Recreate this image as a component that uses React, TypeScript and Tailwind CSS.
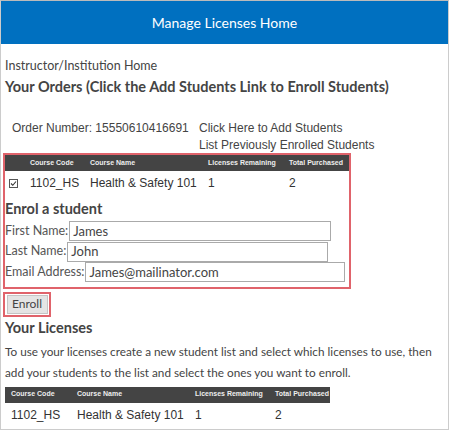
import React from 'react';

const lato = { fontFamily: 'Lato, "Open Sans", sans-serif' };
const arial = { fontFamily: '"Liberation Sans", Arial, sans-serif' };

interface LicenseRow {
  code: string;
  name: string;
  remaining: number;
  purchased: number;
}

const rows: LicenseRow[] = [{ code: '1102_HS', name: 'Health & Safety 101', remaining: 1, purchased: 2 }];

function LicenseTable({ withCheck }: { withCheck?: boolean }) {
  const cols = withCheck
    ? 'grid-cols-[20px_60px_118px_81px_65px] w-[344px]'
    : 'grid-cols-[61px_118px_80px_66px] w-[325px]';
  return (
    <div className={withCheck ? 'w-[344px]' : 'w-[325px]'} style={arial}>
      <div
        className={`grid ${cols} h-[16px] items-center bg-[#444444] text-[7px] font-bold text-[#eeeeee] whitespace-nowrap ${
          withCheck ? '' : 'pl-[6px]'
        }`}
      >
        {withCheck && <span />}
        <span className={withCheck ? 'pl-[5px]' : ''}>Course Code</span>
        <span className="pl-[5px]">Course Name</span>
        <span className="pl-[5px]">Licenses Remaining</span>
        <span className="pl-[5px]">Total Purchased</span>
      </div>
      {rows.map((r) => (
        <div
          key={r.code}
          className={`grid ${cols} h-[24px] items-center text-[12px] text-[#333] whitespace-nowrap ${
            withCheck ? '' : 'pl-[6px]'
          }`}
        >
          {withCheck && (
            <span className="flex pl-[4px]">
              <svg width="9" height="9" viewBox="0 0 9 9">
                <rect x="0.5" y="0.5" width="8" height="8" fill="white" stroke="#555" />
                <path d="M2 4.5 L3.8 6.3 L7 2.5" fill="none" stroke="#333" strokeWidth="1.1" />
              </svg>
            </span>
          )}
          <span className={withCheck ? 'pl-[5px]' : ''}>{r.code}</span>
          <span className="pl-[5px]">{r.name}</span>
          <span className="pl-[5px]">{r.remaining}</span>
          <span className="pl-[5px]">{r.purchased}</span>
        </div>
      ))}
    </div>
  );
}

function Field({ label, value, width }: { label: string; value: string; width: string }) {
  return (
    <div className="flex items-center h-[20.5px] text-[12.5px] text-[#555]">
      <span>{label}</span>
      <div
        className={`ml-[1px] h-[20px] ${width} border border-[#aaa] bg-white px-[3px] flex items-center text-[13px] text-[#444]`}
      >
        {value}
      </div>
    </div>
  );
}

export default function App() {
  return (
    <div className="w-[450px] h-[431px] bg-white overflow-hidden">
      <div className="w-[449px] h-[430px] border border-[#cccccc] border-t-[#bbbbbb]">
        <div
          className="h-[43px] bg-[#0070c0] flex items-center justify-center text-white text-[14px]"
          style={lato}
        >
          Manage Licenses Home
        </div>
        <div className="px-[4px]" style={lato}>
          <div className="mt-[13px] text-[12.5px] text-[#444] leading-[18px]">Instructor/Institution Home</div>
          <div className="mt-[2px] text-[14.5px] font-bold text-[#444] leading-[20px]">
            Your Orders (Click the Add Students Link to Enroll Students)
          </div>

          <div className="mt-[23px] flex pl-[7px] text-[12px] text-[#444] leading-[17px]" style={arial}>
            <span className="w-[187px]">Order Number: 15550610416691</span>
            <div className="flex flex-col">
              <span>Click Here to Add Students</span>
              <span>List Previously Enrolled Students</span>
            </div>
          </div>

          <div className="-mt-[1px] -ml-[2px] w-[348px] border-2 border-solid border-[#e0636b] pb-[4px]">
            <LicenseTable withCheck />
            <div className="mt-[4px] text-[14.5px] font-bold text-[#444] leading-[20px]">Enrol a student</div>
            <div className="mt-[2px]">
              <Field label="First Name:" value="James" width="w-[262px]" />
              <Field label="Last Name:" value="John" width="w-[261px]" />
              <Field label="Email Address:" value="James@mailinator.com" width="w-[260px]" />
            </div>
          </div>

          <div className="mt-[3px] -ml-[2px] w-[48px] h-[25px] border-2 border-solid border-[#e0636b] flex items-center justify-center">
            <button
              type="button"
              className="w-[41px] h-[19px] bg-[#e4e4e4] border border-[#c4c4c4] text-[12px] text-[#444] flex items-center justify-center"
            >
              Enroll
            </button>
          </div>

          <div className="mt-[1px] text-[14.5px] font-bold text-[#444] leading-[20px]">Your Licenses</div>
          <p className="mt-[3px] text-[11.75px] text-[#444] leading-[21px]">
            To use your licenses create a new student list and select which licenses to use, then add your students to
            the list and select the ones you want to enroll.
          </p>
          <div className="mt-[4px]">
            <LicenseTable />
          </div>
        </div>
      </div>
    </div>
  );
}
